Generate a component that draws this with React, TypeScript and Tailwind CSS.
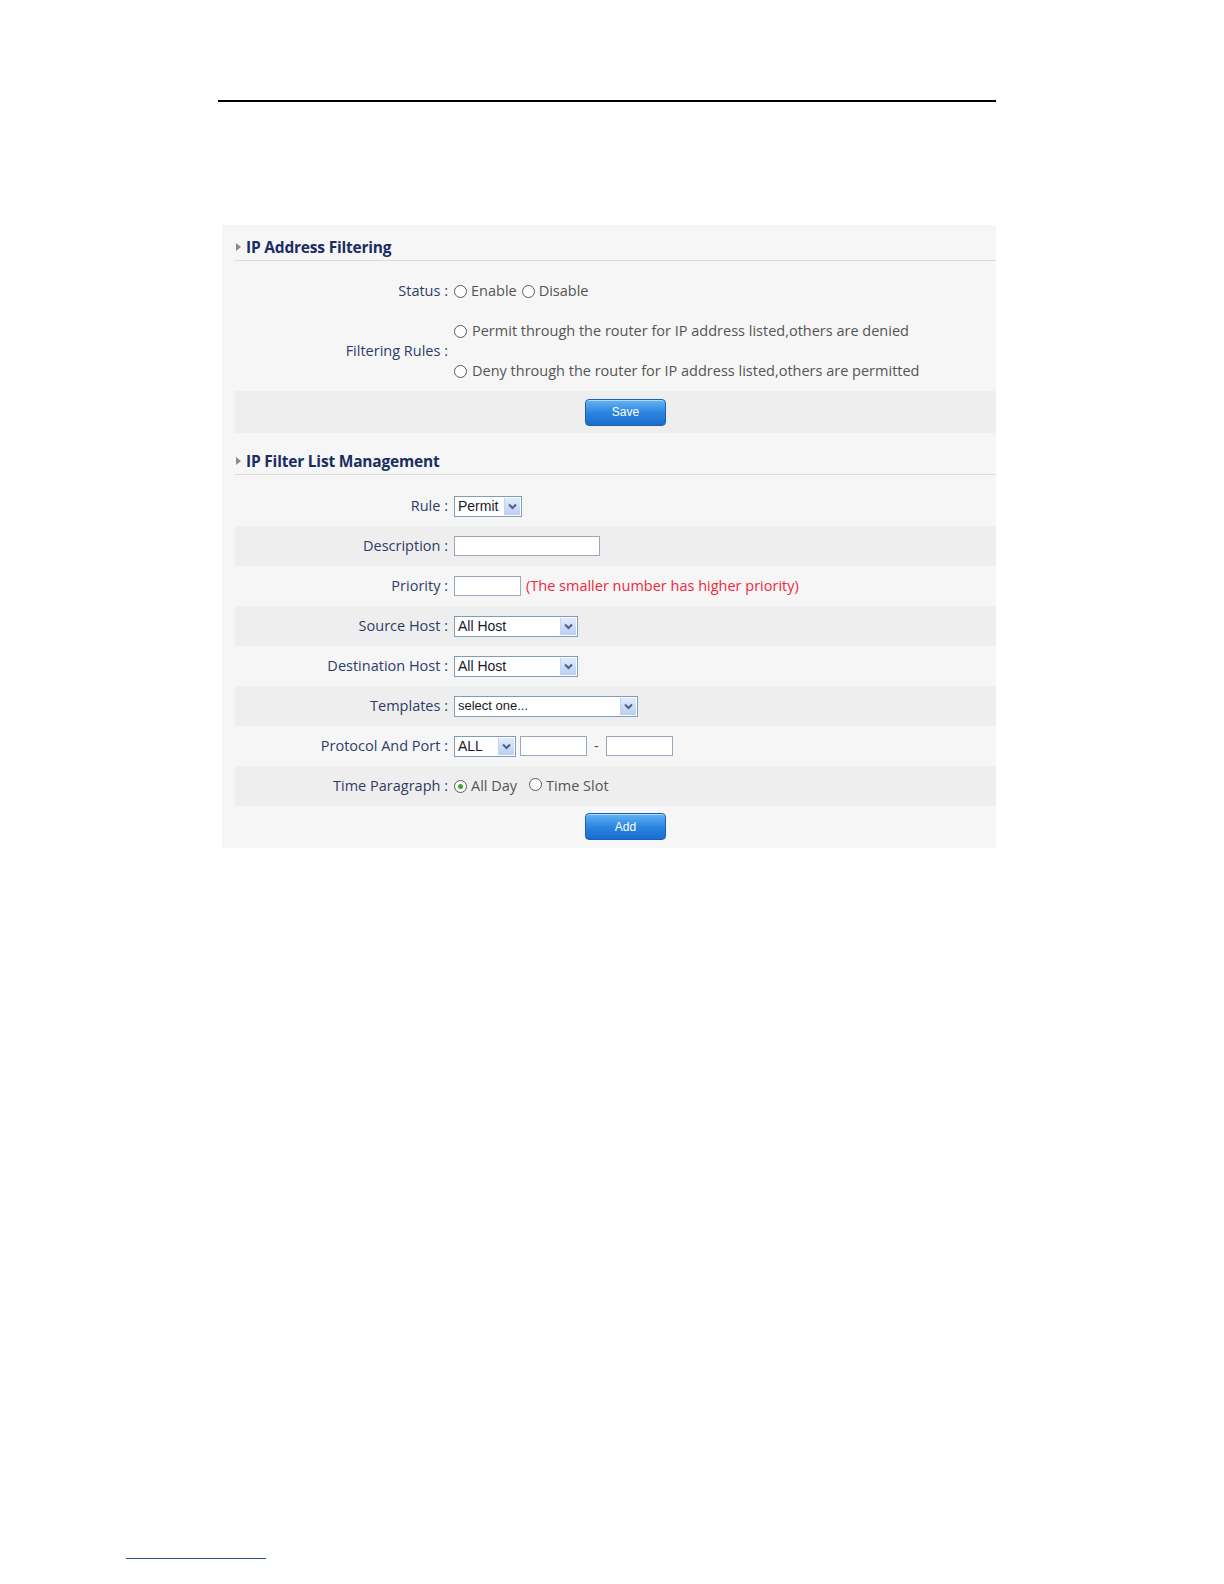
import React from "react";

const labelFont = { fontFamily: "'Open Sans', 'Noto Sans', sans-serif" };

function Radio({ checked = false }: { checked?: boolean }) {
  return (
    <span className="inline-flex h-[13px] w-[13px] shrink-0 items-center justify-center rounded-full border border-[#5b5b5b] bg-white">
      {checked && <span className="h-[5px] w-[5px] rounded-full bg-[#3aa63a]" />}
    </span>
  );
}

function Arrow() {
  return (
    <span className="flex h-full w-[16px] items-center justify-center border-l border-[#c3d3f0] bg-gradient-to-b from-[#e3ecfc] to-[#b9cdf3]">
      <svg width="9" height="7" viewBox="0 0 9 7">
        <path d="M1 1.5 L4.5 5 L8 1.5" fill="none" stroke="#4d6185" strokeWidth="2" />
      </svg>
    </span>
  );
}

function Select({ value, width, small = false }: { value: string; width: string; small?: boolean }) {
  return (
    <span
      className={`flex h-[21px] items-stretch border border-[#7f9db9] bg-white ${width}`}
      style={{ fontFamily: "'Liberation Sans', Arial, sans-serif" }}
    >
      <span className={`flex flex-1 items-center pl-[3px] text-[#1a1a2a] ${small ? "text-[13px]" : "text-[14px]"}`}>{value}</span>
      <span className="p-[1px]">
        <Arrow />
      </span>
    </span>
  );
}

function Input({ width }: { width: string }) {
  return <span className={`block h-[20px] border border-[#9aa8bb] bg-white ${width}`} />;
}

function Row({ label, children, dark = false, h = "h-[40px]" }: { label: string; children?: React.ReactNode; dark?: boolean; h?: string }) {
  return (
    <div className={`flex items-center ${h} ${dark ? "bg-[#eeeeee]" : ""}`}>
      <div className="w-[214px] pr-[1px] text-right text-[14.5px] leading-[20px] text-[#2e3c68]" style={labelFont}>
        {label} :
      </div>
      <div className="ml-[5px] flex items-center gap-[5px] text-[14.5px] leading-[20px] text-[#555]" style={labelFont}>
        {children}
      </div>
    </div>
  );
}

function Heading({ title, h }: { title: string; h: string }) {
  return (
    <div className={`flex items-end border-b border-[#dcdcdc] ${h}`}>
      <div className="flex items-center pb-[3px]">
        <svg width="5" height="8" viewBox="0 0 5 8" className="mr-[5px] ml-[1px]">
          <path d="M0 0 L5 4 L0 8 Z" fill="#8a8a8a" />
        </svg>
        <span
          className="text-[15.5px] font-bold leading-[20px] text-[#1a2d63]"
          style={{ fontFamily: "'Open Sans', Lato, sans-serif", letterSpacing: "-0.2px" }}
        >
          {title}
        </span>
      </div>
    </div>
  );
}

function Button({ text }: { text: string }) {
  return (
    <span
      className="flex h-[27px] w-[81px] items-center justify-center rounded-[4px] border border-[#1c5fb4] bg-gradient-to-b from-[#63b3f5] via-[#2d86e0] to-[#1a6ccc] text-[12px] text-white shadow-[inset_0_1px_0_rgba(255,255,255,0.5)]"
      style={{ fontFamily: "'Liberation Sans', Arial, sans-serif" }}
    >
      {text}
    </span>
  );
}

export default function App() {
  return (
    <div className="relative h-[1584px] w-[1224px] overflow-hidden bg-white">
      <div className="absolute left-[218px] top-[100px] h-[2px] w-[778px] bg-black" />
      <div className="h-[225px]" />
      <div className="ml-[222px] w-[774px] bg-[#f6f6f6] pb-[1px] pl-[13px]">
        <Heading title="IP Address Filtering" h="h-[36px]" />
        <div className="h-[10px]" />
        <Row label="Status">
          <Radio />
          <span className="-ml-[1px]">Enable</span>
          <Radio />
          <span className="-ml-[1px]">Disable</span>
        </Row>
        <div className="flex h-[80px] items-center">
          <div className="w-[214px] pr-[1px] text-right text-[14.5px] leading-[20px] text-[#2e3c68]" style={labelFont}>
            Filtering Rules :
          </div>
          <div className="ml-[5px] flex flex-col text-[14.5px] leading-[20px] text-[#555]" style={labelFont}>
            <div className="flex h-[40px] items-center gap-[5px]">
              <Radio />
              <span>Permit through the router for IP address listed,others are denied</span>
            </div>
            <div className="flex h-[40px] items-center gap-[5px]">
              <Radio />
              <span>Deny through the router for IP address listed,others are permitted</span>
            </div>
          </div>
        </div>
        <div className="flex h-[42px] items-center bg-[#eeeeee]">
          <div className="ml-[350px]">
            <Button text="Save" />
          </div>
        </div>
        <Heading title="IP Filter List Management" h="h-[42px]" />
        <div className="h-[11px]" />
        <Row label="Rule">
          <Select value="Permit" width="w-[68px]" />
        </Row>
        <Row label="Description" dark>
          <Input width="w-[146px]" />
        </Row>
        <Row label="Priority">
          <Input width="w-[67px]" />
          <span className="text-[#f0283c]">(The smaller number has higher priority)</span>
        </Row>
        <Row label="Source Host" dark>
          <Select value="All Host" width="w-[124px]" />
        </Row>
        <Row label="Destination Host">
          <Select value="All Host" width="w-[124px]" />
        </Row>
        <Row label="Templates" dark>
          <Select value="select one..." width="w-[184px]" small />
        </Row>
        <Row label="Protocol And Port">
          <Select value="ALL" width="w-[62px]" />
          <span className="-ml-[1px]">
            <Input width="w-[67px]" />
          </span>
          <span className="mx-[2px]">-</span>
          <Input width="w-[67px]" />
        </Row>
        <Row label="Time Paragraph" dark>
          <Radio checked />
          <span className="-ml-[1px]">All Day</span>
          <span className="ml-[7px]">
            <Radio />
          </span>
          <span className="-ml-[1px]">Time Slot</span>
        </Row>
        <div className="flex h-[41px] items-center">
          <div className="ml-[350px]">
            <Button text="Add" />
          </div>
        </div>
      </div>
      <div className="absolute left-[126px] top-[1558px] h-[1px] w-[140px] bg-[#2b4aa0]" />
    </div>
  );
}
